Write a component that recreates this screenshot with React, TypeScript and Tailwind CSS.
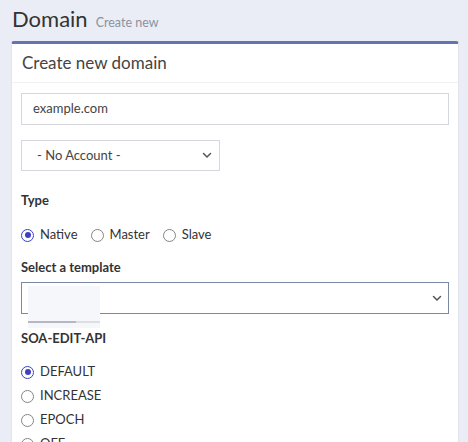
import React from "react";

function Chevron() {
  return (
    <svg width="10" height="7" viewBox="0 0 10 7" fill="none">
      <path d="M1.5 1.5 L5 5 L8.5 1.5" stroke="#555" strokeWidth="1.5" strokeLinecap="round" strokeLinejoin="round" />
    </svg>
  );
}

function Radio({ checked, label }: { checked?: boolean; label: string }) {
  return (
    <div className="flex items-center h-[24px]">
      {checked ? (
        <span className="w-[13px] h-[13px] rounded-full border-[1.5px] border-[#3d3fc4] flex items-center justify-center">
          <span className="w-[6px] h-[6px] rounded-full bg-[#3d3fc4]" />
        </span>
      ) : (
        <span className="w-[13px] h-[13px] rounded-full border-[1.5px] border-[#858585]" />
      )}
      <span className="ml-[6px] text-[13px] text-[#333]">{label}</span>
    </div>
  );
}

export default function App() {
  return (
    <div className="min-h-screen bg-[#eaedf5] font-['Lato',sans-serif] text-[#333] overflow-hidden">
      <div className="h-[41px] pl-3 flex items-end pb-[11px] gap-[8px]">
        <span className="text-[22px] leading-none text-[#333]">Domain</span>
        <span className="text-[12.5px] leading-none text-[#8c91a0] pb-[1px]">Create new</span>
      </div>
      <div className="ml-[11px] mr-[9px] bg-white border-t-[3px] border-[#6473b1] rounded-t-[3px] border-x border-x-[#e2e4ec]">
        <div className="h-[39px] px-[10px] flex items-center border-b border-[#f1f1f1] text-[17px] text-[#444]">
          Create new domain
        </div>
        <div className="px-[9px] pt-[10px] pb-4">
          <div className="h-[32px] border border-[#d4d7dd] flex items-center px-[11px] text-[13px] text-[#444]">
            example.com
          </div>
          <div className="mt-[15px] w-[199px] h-[31px] border border-[#d4d7dd] flex items-center justify-between pl-[15px] pr-[7px] text-[13px] text-[#444]">
            <span>- No Account -</span>
            <Chevron />
          </div>
          <div className="mt-[20px] h-[20px] flex items-center text-[13px] font-bold text-[#333]">Type</div>
          <div className="mt-[12px] flex items-center gap-[13px]">
            <Radio checked label="Native" />
            <Radio label="Master" />
            <Radio label="Slave" />
          </div>
          <div className="mt-[11px] h-[20px] flex items-center text-[13px] font-bold text-[#333]">Select a template</div>
          <div className="relative mt-[4px]">
            <div className="h-[32px] border border-[#7b88a3] flex items-center justify-end pr-[6px]">
              <Chevron />
            </div>
            <div className="absolute left-[7px] top-[4px] w-[72px] h-[42px] bg-[#f6f7fb]">
              <div className="absolute left-0 bottom-[5px] h-[2px] w-[48px] bg-[#b5b8c2]" />
              <div className="absolute left-[48px] bottom-[5px] h-[2px] w-[24px] bg-[#dcdee4]" />
            </div>
          </div>
          <div className="mt-[15px] h-[20px] flex items-center text-[13px] font-bold text-[#333]">SOA-EDIT-API</div>
          <div className="mt-[11px] flex flex-col">
            <Radio checked label="DEFAULT" />
            <Radio label="INCREASE" />
            <Radio label="EPOCH" />
            <Radio label="OFF" />
          </div>
        </div>
      </div>
    </div>
  );
}
